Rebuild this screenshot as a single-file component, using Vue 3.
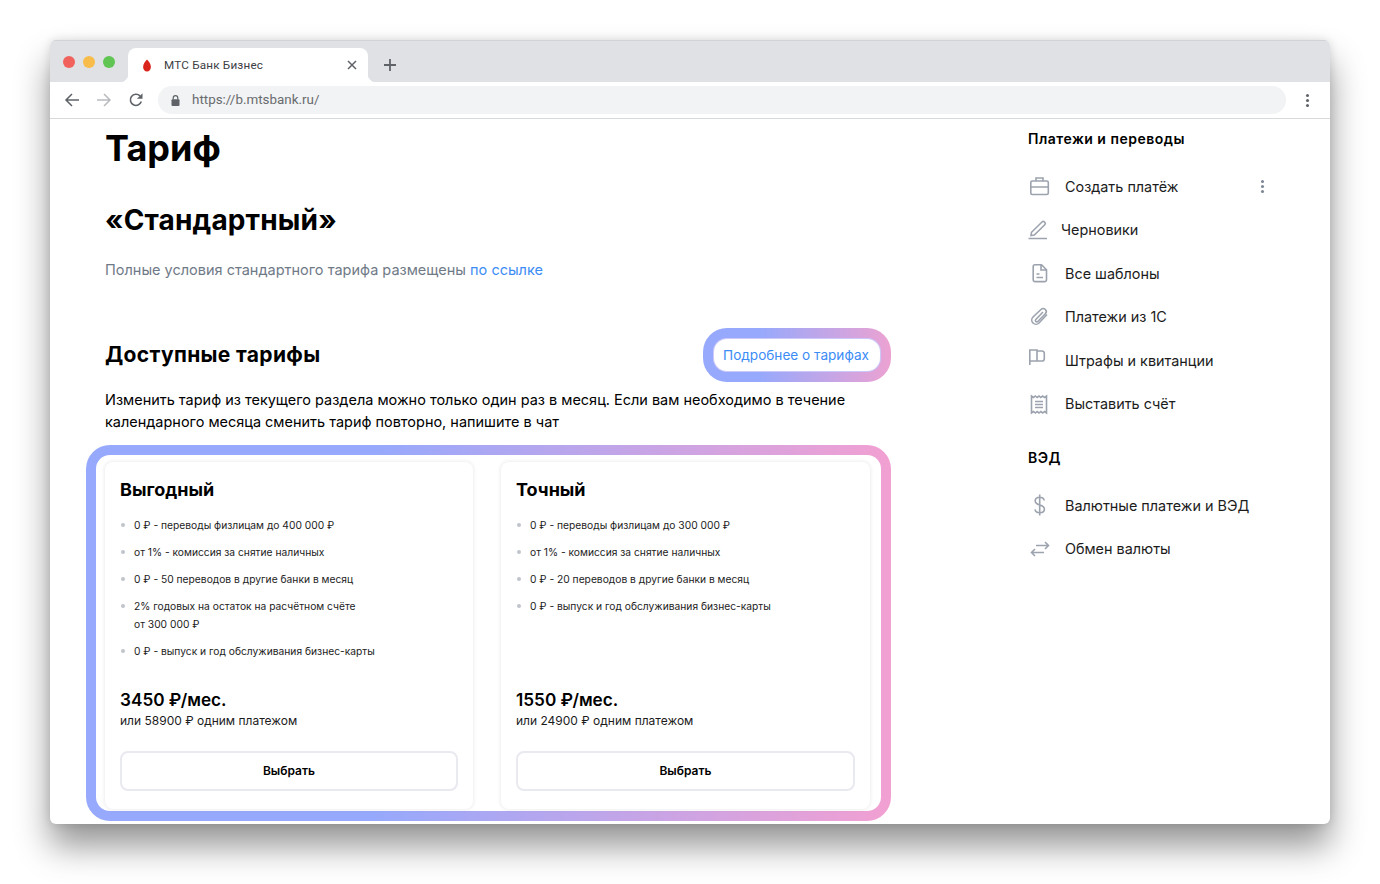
<template>
  <div class="window">
    <div class="tabstrip">
      <div class="lights">
        <span class="light red"></span>
        <span class="light yellow"></span>
        <span class="light green"></span>
      </div>
      <div class="tab">
        <svg class="favicon" width="10" height="13" viewBox="0 0 10 13">
          <path d="M5 .5C6.8 2.4 8.9 5 8.9 8c0 2.600-1.700 4.500-3.900 4.500S1.100 10.600 1.100 8C1.100 5 3.200 2.400 5 .5z" fill="#d9251c" />
        </svg>
        <span class="tab-title">МТС Банк Бизнес</span>
        <svg class="tab-close" width="10" height="10" viewBox="0 0 10 10">
          <path d="M1 1l8 8M9 1L1 9" stroke="#5f6368" stroke-width="1.500" fill="none" />
        </svg>
      </div>
      <svg class="new-tab" width="14" height="14" viewBox="0 0 14 14">
        <path d="M7 1v12M1 7h12" stroke="#5f6368" stroke-width="1.800" fill="none" />
      </svg>
    </div>

    <div class="toolbar">
      <svg class="nav" width="16" height="16" viewBox="0 0 16 16" fill="none" stroke="#5f6368" stroke-width="1.500">
        <path d="M15 8H2M8 2L2 8l6 6" />
      </svg>
      <svg class="nav" width="16" height="16" viewBox="0 0 16 16" fill="none" stroke="#b8babe" stroke-width="1.500">
        <path d="M1 8h13M8 2l6 6-6 6" />
      </svg>
      <svg class="nav" width="16" height="16" viewBox="0 0 16 16" fill="none">
        <path d="M13.300 9.600A5.600 5.600 0 1 1 12 3.900" stroke="#5f6368" stroke-width="1.600" />
        <path d="M14.500 1.200v5.600H8.900z" fill="#5f6368" />
      </svg>
      <div class="omnibox">
        <svg width="9" height="11" viewBox="0 0 9 11">
          <path d="M2.200 4.500V3a2.300 2.300 0 0 1 4.600 0v1.500" fill="none" stroke="#5f6368" stroke-width="1.200" />
          <rect x="0.500" y="4.300" width="8" height="6.700" rx="1" fill="#5f6368" />
        </svg>
        <span class="url">https://b.mtsbank.ru/</span>
      </div>
      <div class="kebab">
        <span></span><span></span><span></span>
      </div>
    </div>

    <div class="page">
      <main class="main">
        <h1>Тариф</h1>
        <h2>«Стандартный»</h2>
        <p class="note">Полные условия стандартного тарифа размещены <a href="#">по ссылке</a></p>

        <div class="section-head">
          <h3>Доступные тарифы</h3>
          <div class="more-ring">
            <button type="button" class="more">Подробнее о тарифах</button>
          </div>
        </div>
        <p class="desc">
          Изменить тариф из текущего раздела можно только один раз в месяц. Если вам необходимо в течение
          календарного месяца сменить тариф повторно, напишите в чат
        </p>

        <div class="plans-ring">
          <div class="plans">
            <div v-for="plan in plans" :key="plan.name" class="card">
              <h4>{{ plan.name }}</h4>
              <ul>
                <li v-for="item in plan.items" :key="item">{{ item }}</li>
              </ul>
              <div class="price">{{ plan.price }}</div>
              <div class="once">{{ plan.once }}</div>
              <button type="button" class="pick">Выбрать</button>
            </div>
          </div>
        </div>
      </main>

      <aside class="side">
        <template v-for="group in menu" :key="group.title">
          <div class="side-title">{{ group.title }}</div>
          <div class="side-list">
            <div v-for="row in group.rows" :key="row.label" class="side-row" :class="{ tight: row.tight }">
              <svg class="side-icon" width="24" height="24" viewBox="0 0 24 24" fill="none" stroke="#9ca3ae" stroke-width="1.600" v-html="row.icon"></svg>
              <span>{{ row.label }}</span>
              <div v-if="row.more" class="kebab small">
                <span></span><span></span><span></span>
              </div>
            </div>
          </div>
        </template>
      </aside>
    </div>
  </div>
</template>

<script setup>
const plans = [
  {
    name: "Выгодный",
    items: [
      "0 ₽ - переводы физлицам до 400 000 ₽",
      "от 1% - комиссия за снятие наличных",
      "0 ₽ - 50 переводов в другие банки в месяц",
      "2% годовых на остаток на расчётном счёте\nот 300 000 ₽",
      "0 ₽ - выпуск и год обслуживания бизнес-карты",
    ],
    price: "3450 ₽/мес.",
    once: "или 58900 ₽ одним платежом",
  },
  {
    name: "Точный",
    items: [
      "0 ₽ - переводы физлицам до 300 000 ₽",
      "от 1% - комиссия за снятие наличных",
      "0 ₽ - 20 переводов в другие банки в месяц",
      "0 ₽ - выпуск и год обслуживания бизнес-карты",
    ],
    price: "1550 ₽/мес.",
    once: "или 24900 ₽ одним платежом",
  },
];

const menu = [
  {
    title: "Платежи и переводы",
    rows: [
      {
        label: "Создать платёж",
        more: true,
        icon: '<rect x="2.800" y="7" width="17.500" height="13.500" rx="1.500"/><path d="M8 7V4h7v3M2.800 13h17.500"/>',
      },
      {
        label: "Черновики",
        tight: true,
        icon: '<path d="M3 17.500l.5-3.200L14 4a1.700 1.700 0 0 1 2.400 0l.4.400a1.700 1.700 0 0 1 0 2.400L6.300 17zM.5 20.500h18.500"/>',
      },
      {
        label: "Все шаблоны",
        icon: '<path d="M7 3.800h6.500l5 5v10a1.800 1.800 0 0 1-1.800 1.800H7a1.800 1.800 0 0 1-1.800-1.800V5.600A1.800 1.800 0 0 1 7 3.800zM13 4v5h5.300M8.500 13h3M8.500 16.500h6.500"/>',
      },
      {
        label: "Платежи из 1С",
        icon: '<path d="M19 9.500L11 18a4.200 4.200 0 0 1-6-6L13 4.500a3 3 0 0 1 4.300 4.300L9.800 16.500a1.400 1.400 0 0 1-2-2L15 7"/>',
      },
      {
        label: "Штрафы и квитанции",
        icon: '<path d="M1.800 17V2H9V13M9 3H14A2.300 2.300 0 0 1 16.300 5.300v5.400A2.300 2.300 0 0 1 14 13H1.800"/>',
      },
      {
        label: "Выставить счёт",
        icon: '<g transform="translate(-1 0)"><path d="M4.500 4l2 1.500L8.300 4l1.800 1.500L12 4l1.800 1.500L15.700 4l1.800 1.500L19.500 4v17l-2-1.500-1.800 1.500-1.900-1.500L12 21l-1.900-1.500L8.300 21l-1.800-1.500-2 1.500zM8 9.500h8M8 12.500h8M8 15.500h8"/></g>',
      },
    ],
  },
  {
    title: "ВЭД",
    rows: [
      {
        label: "Валютные платежи и ВЭД",
        icon: '<path d="M16.200 7.500c-.3-2-2.100-3.200-4.500-3.200-2.600 0-4.500 1.400-4.500 3.700 0 5.300 9.200 2.700 9.200 8 0 2.300-2 3.700-4.700 3.700-2.500 0-4.400-1.300-4.700-3.400M11.700 1.500v21"/>',
      },
      {
        label: "Обмен валюты",
        icon: '<path d="M8 8.500h12.500M17 5l3.500 3.500L17 12M16 15.500H3.500M7 12l-3.500 3.500L7 19"/>',
      },
    ],
  },
];
</script>

<style>
html,
body {
  margin: 0;
  background: #fff;
}
</style>

<style scoped>
.window {
  margin: 40px 50px 60px;
  height: 784px;
  border-radius: 6px;
  overflow: hidden;
  background: #fff;
  display: flex;
  flex-direction: column;
  box-shadow: 0 22px 34px rgba(0, 0, 0, 0.42), 0 0 10px rgba(0, 0, 0, 0.12);
  font-family: Inter, "Liberation Sans", sans-serif;
  color: #000;
}

.tabstrip {
  height: 42px;
  flex: none;
  background: #dfe1e5;
  display: flex;
  align-items: flex-end;
  box-shadow: inset 0 1px 0 #d2d3d6;
}

.lights {
  display: flex;
  gap: 8px;
  margin: 0 13px 14px 13px;
  align-self: flex-end;
}

.light {
  width: 12px;
  height: 12px;
  border-radius: 50%;
}

.red { background: #f1625d; }
.yellow { background: #f8bc4a; }
.green { background: #60c552; }

.tab {
  width: 240px;
  height: 34px;
  background: #fff;
  border-radius: 8px 8px 0 0;
  display: flex;
  align-items: center;
  padding: 0 11px 0 14px;
  box-sizing: border-box;
  position: relative;
}

.tab::before,
.tab::after {
  content: "";
  position: absolute;
  bottom: 0;
  width: 8px;
  height: 8px;
}

.tab::before {
  left: -8px;
  background: radial-gradient(circle at 0 0, transparent 8px, #fff 8.500px);
}

.tab::after {
  right: -8px;
  background: radial-gradient(circle at 100% 0, transparent 8px, #fff 8.500px);
}

.tab-title {
  flex: 1;
  margin-left: 12px;
  font: 11.700px/16px Roboto, "Liberation Sans", sans-serif;
  letter-spacing: 0.2px;
  color: #3c4043;
}

.new-tab {
  margin: 0 0 10px 15px;
}

.toolbar {
  height: 36px;
  flex: none;
  border-bottom: 1px solid #d8d9db;
  background: #fff;
  display: flex;
  align-items: center;
  padding: 0 0 0 14px;
  gap: 16px;
}

.omnibox {
  width: 1128px;
  height: 28px;
  margin-left: -2px;
  border-radius: 14px;
  background: #f1f3f4;
  display: flex;
  align-items: center;
  gap: 12px;
  padding-left: 13px;
  box-sizing: border-box;
}

.url {
  font: 13.400px/18px Roboto, "Liberation Sans", sans-serif;
  color: #696b6f;
}

.kebab {
  display: flex;
  flex-direction: column;
  gap: 2px;
  margin-left: 4px;
}

.kebab span {
  width: 3px;
  height: 3px;
  border-radius: 50%;
  background: #5f6368;
  display: block;
}

.kebab.small {
  margin-left: auto;
  margin-right: 4px;
}

.kebab.small span {
  background: #7c8592;
}

.page {
  flex: 1;
  min-height: 0;
  display: flex;
}

.main {
  width: 841px;
  flex: none;
  padding-left: 36px;
  box-sizing: border-box;
}

h1 {
  margin: 7px 0 0 19px;
  font-size: 36px;
  line-height: 44px;
  font-weight: 700;
}

h2 {
  margin: 32px 0 0 19px;
  font-size: 28px;
  line-height: 36px;
  font-weight: 700;
  letter-spacing: 0.15px;
}

.note {
  margin: 21px 0 0 19px;
  font-size: 14.500px;
  line-height: 22px;
  color: #6f7a87;
}

.note a {
  color: #3c8cf5;
  text-decoration: none;
}

.section-head {
  margin: 47px 0 0 19px;
  display: flex;
  align-items: center;
  justify-content: space-between;
}

h3 {
  margin: 0;
  font-size: 21px;
  line-height: 28px;
  font-weight: 700;
  letter-spacing: 0.35px;
}

.more-ring {
  padding: 10px;
  border-radius: 24px;
  background: linear-gradient(90deg, #97a9fc 30%, #eca2d2 100%);
}

.more {
  display: block;
  width: 168px;
  height: 34px;
  padding: 0 2px 0 0;
  border: 1px solid rgba(110, 100, 240, 0.35);
  border-radius: 14px;
  background: #fff;
  color: #3c8cf5;
  font: 13.600px/20px Inter, "Liberation Sans", sans-serif;
}

.desc {
  margin: 7px 0 0 19px;
  width: 780px;
  font-size: 14.470px;
  line-height: 22px;
}

.plans-ring {
  margin-top: 12px;
  padding: 10px;
  border-radius: 24px;
  background: linear-gradient(90deg, #97a9fc 36%, #f2a0d2 100%);
}

.plans {
  height: 356px;
  box-sizing: border-box;
  padding: 7px 11px 2px 9px;
  border-radius: 14px;
  background: #fff;
  display: grid;
  grid-template-columns: 368px 369px;
  column-gap: 28px;
}

.card {
  border-radius: 8px;
  background: #fff;
  box-shadow: 0 0 4px rgba(30, 30, 50, 0.12);
  padding: 17px 15px 18px;
  display: flex;
  flex-direction: column;
}

h4 {
  margin: 0;
  font-size: 18px;
  line-height: 22px;
  font-weight: 700;
}

ul {
  list-style: none;
  margin: 15px 0 0;
  padding: 0 0 0 14px;
}

li {
  position: relative;
  font-size: 10.250px;
  line-height: 18px;
  margin-bottom: 9px;
  color: #1c1c1c;
  white-space: pre-line;
}

li::before {
  content: "";
  position: absolute;
  left: -13px;
  top: 7px;
  width: 4px;
  height: 4px;
  border-radius: 50%;
  background: #c0c5cc;
}

.price {
  margin-top: auto;
  margin-bottom: 1px;
  font-size: 17.200px;
  line-height: 22px;
  font-weight: 600;
}

.once {
  font-size: 12px;
  line-height: 18px;
  color: #1c1c1c;
}

.pick {
  margin-top: 21px;
  height: 40px;
  flex: none;
  border: 2px solid #e9e9f0;
  border-radius: 8px;
  background: #fff;
  font: 600 12px/16px Inter, "Liberation Sans", sans-serif;
  color: #000;
}

.side {
  flex: 1;
  padding: 10px 62px 0 137px;
}

.side-title {
  font-size: 14px;
  line-height: 20px;
  font-weight: 600;
  letter-spacing: 0.5px;
}

.side-list {
  margin: 15.250px 0 22.750px;
}

.side-row {
  height: 43.500px;
  display: flex;
  align-items: center;
  gap: 13px;
  font-size: 14.400px;
  color: #1c1c1c;
}

.side-row.tight {
  gap: 9px;
}

.side-icon {
  flex: none;
}
</style>
